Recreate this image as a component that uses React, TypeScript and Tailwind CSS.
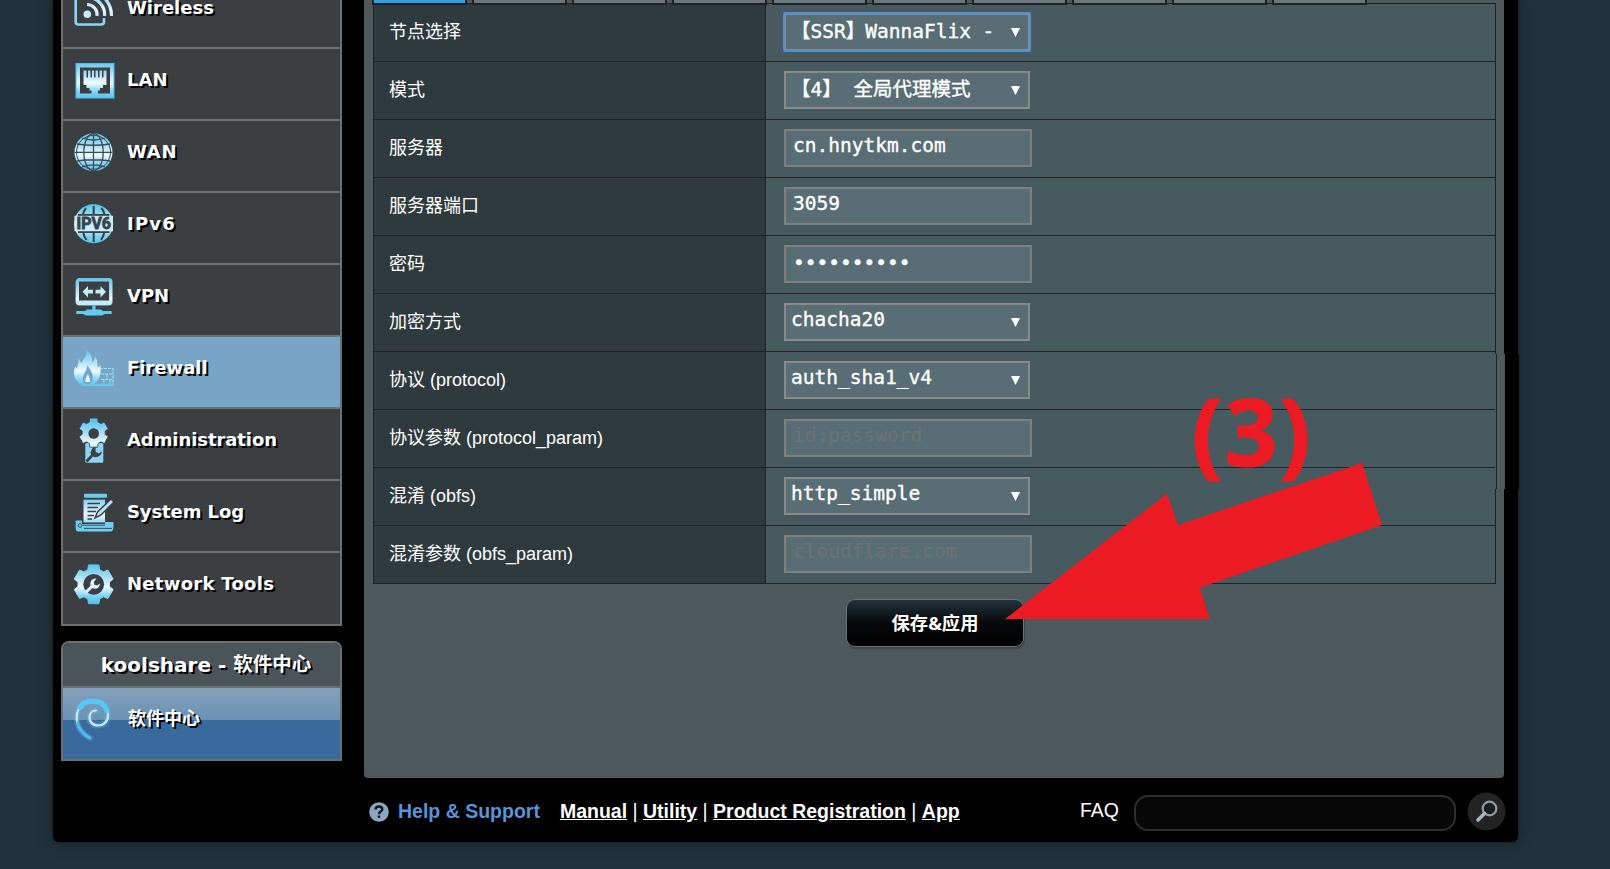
import React from "react";

const DARK = "#3b3f41";

function IconFrame({ children }: { children: React.ReactNode }) {
  return (
    <svg width="42" height="48" viewBox="0 0 42 48" className="block shrink-0 overflow-visible">
      <defs>
        <linearGradient id="ice" gradientUnits="userSpaceOnUse" x1="0" y1="2" x2="0" y2="40">
          <stop offset="0" stopColor="#58c4ee" />
          <stop offset="0.3" stopColor="#a5dcf6" />
          <stop offset="0.58" stopColor="#eefbff" />
          <stop offset="0.8" stopColor="#84d4f5" />
          <stop offset="1" stopColor="#52c2ee" />
        </linearGradient>
      </defs>
      {children}
    </svg>
  );
}

function gearPath(cx: number, cy: number, outer: number, inner: number) {
  const pts: string[] = [];
  for (let i = 0; i < 6; i++) {
    const mid = -90 + i * 60;
    const spots: [number, number][] = [
      [mid - 22, inner],
      [mid - 15, outer - 0.5],
      [mid + 15, outer - 0.5],
      [mid + 22, inner],
    ];
    for (const [deg, r] of spots) {
      const a = (deg * Math.PI) / 180;
      pts.push(`${(cx + r * Math.cos(a)).toFixed(2)} ${(cy + r * Math.sin(a)).toFixed(2)}`);
    }
  }
  return `M${pts.join("L")}Z`;
}

const WirelessIcon = () => (
  <IconFrame>
    <g fill="none" stroke="url(#ice)" strokeWidth="3.2">
      <path d="M1.7 3V35Q1.7 37.5 4.2 37.5H27Q30 37.5 30 35V31" strokeWidth="2.6" stroke="#8fd6f6" />
      <path d="M13 17.5A10 10 0 0 1 23 29" />
      <path d="M13 10.5A17 17 0 0 1 30.500 29" />
      <path d="M14 3.5A25 25 0 0 1 37.500 29" />
    </g>
    <circle cx="13.3" cy="27.3" r="3.8" fill="#c8ecfb" />
  </IconFrame>
);

const LanIcon = () => (
  <IconFrame>
    <rect x="2" y="4.5" width="38" height="34.5" fill="url(#ice)" />
    <rect x="2" y="4.5" width="38" height="34.5" fill="none" stroke="#52bdea" strokeWidth="1" />
    <rect x="6" y="8.5" width="30" height="26" fill={DARK} />
    <path
      d="M9.5 11.5H12.5V18.5H14V11.5H16.5V18.5H18V11.5H20V18.5H21.5V11.5H24V18.5H25.5V11.5H28V18.5H29.5V11.5H32.5V26H29V29H26V31.5H24V36H17.5V31.5H15.5V29H12.5V26H9.5Z"
      fill="url(#ice)"
    />
  </IconFrame>
);

const WanIcon = () => (
  <IconFrame>
    <circle cx="19.5" cy="21.3" r="19" fill="url(#ice)" />
    <g fill="none" stroke="#3b4a55" strokeWidth="1.3">
      <path d="M19.5 2.3V40.3M.5 21.3H38.5M3 13Q19.5 15.500 36 13M3 30Q19.500 27.500 36 30M8 7Q19.500 11 31 7M8 35.800Q19.500 32 31 35.800" />
      <ellipse cx="19.5" cy="21.3" rx="9.7" ry="18.6" />
      <circle cx="19.5" cy="21.3" r="17" strokeWidth="1" />
    </g>
  </IconFrame>
);

const Ipv6Icon = () => (
  <IconFrame>
    <circle cx="19.7" cy="20.7" r="19.5" fill="url(#ice)" />
    <g fill="none" stroke={DARK} strokeWidth="2">
      <path d="M19.7 3V12M12 5Q9.500 8 8.700 12.500M27.400 5Q30 8 30.700 12.500M19.700 29V39M9 29Q10 33.500 12.500 37M30.400 29Q29.400 33.500 27 37M4 12H35.500M4 29H35.500" />
    </g>
    <rect x="0.5" y="12.8" width="38.5" height="15.4" fill="#c9edfb" />
    <text
      x="2.5"
      y="26.2"
      textLength="34.5"
      lengthAdjust="spacingAndGlyphs"
      fill="#38444b"
      stroke="#38444b"
      strokeWidth="0.8"
      className="text-[16px] font-bold [font-family:Roboto,'Liberation_Sans',sans-serif]"
    >
      IPV6
    </text>
  </IconFrame>
);

const VpnIcon = () => (
  <IconFrame>
    <rect x="3.3" y="4.8" width="33.5" height="24" rx="2" fill="none" stroke="url(#ice)" strokeWidth="3.4" />
    <rect x="3" y="25.5" width="34" height="4.6" rx="1" fill="#c2ebfb" />
    <path d="M18.3 30.5H21.5V34.5H27L29 36H37.7V39H31L28 40.5H12L9 39H2.3V36H11L13 34.5H18.3Z" fill="#62c9f0" />
    <path d="M8.5 16.7L14 11V14.8H19V18.6H14V22.4ZM32 16.7L26.5 11V14.8H21.5V18.6H26.5V22.4Z" fill="#c4ebfb" />
  </IconFrame>
);

const FirewallIcon = () => (
  <IconFrame>
    <g fill="none" stroke="#9be0fa" strokeWidth="1.2">
      <path d="M26 21.5H39V38H8M27 27H39M27 32.500H39M33 27V32.500M36 32.500V38M30 32.500V38" strokeDasharray="3 1" />
      <path d="M8 37.700H39.500" stroke="#5ecbf4" strokeWidth="1.600" />
    </g>
    <path
      d="M12 3C16.500 5 18 10 18.500 15.500C20 14 20.500 12 21 9.500C24 13 23 17 24 20C25 20 25.500 19.500 26.300 18C28 27 25 35 18.500 38H9C3 36 0 31 0 26C0 23.500 .600 22 1.200 19.500L3 21.500C3.500 19 4.500 16 4.800 12L7.500 16C9 12 14 8 12 3Z"
      fill="url(#ice)"
    />
    <path d="M13.500 18C15 22 20 26 18.500 32C18 35.500 16 37 13.500 37C10.500 37 9 35 9 32C9 26 13 24 13.500 18Z" fill="#6fa6cd" />
    <path d="M13.800 27Q17 33 15.500 35H11.500Q11 32 13.800 27Z" fill="#ecfbff" />
  </IconFrame>
);

const AdminIcon = () => (
  <IconFrame>
    <rect x="11.3" y="24" width="18" height="19.7" rx="1.5" fill="#8ad4f4" />
    <path d="M12.5 42.5L19 35.5" stroke={DARK} strokeWidth="2.6" />
    <path d="M23.5 27.500A6.500 6.500 0 0 0 16.500 34Q19 39.500 24 37.800Q27.500 36 28 32.500L24.500 34.500L21.500 32.500V29.500Z" fill={DARK} />
    <path d={gearPath(19.7, 13.7, 15.6, 11.6)} fill="url(#ice)" stroke={DARK} strokeWidth="0.8" />
    <circle cx="19.7" cy="14.5" r="5.3" fill={DARK} />
  </IconFrame>
);

const LogIcon = () => (
  <IconFrame>
    <rect x="10" y="2.7" width="23" height="4" rx="1" fill="#6ecaf1" />
    <path d="M9.5 8.7H31V31.5H9.5Z" fill="url(#ice)" />
    <path d="M13.5 12.5H26M13.5 16.5H24M13.5 20.5H22M13.5 24.5H20M13.5 28H18" stroke={DARK} strokeWidth="1.5" />
    <path d="M21 27L23.5 21L37 8L40 11L27 24Z" fill="#b9e6fa" stroke={DARK} strokeWidth="1.5" />
    <path d="M1.7 29.5H8V33H31V31H39.500V35Q39.500 40.500 36.500 40.500H4.500Q1.700 40.500 1.700 37Z" fill="#70cdf2" />
    <path d="M8.5 34.2H31M10 37.4H38" stroke="#31546a" strokeWidth="1" />
    <circle cx="6" cy="34.5" r="1.8" fill="none" stroke="#31546a" strokeWidth="1" />
  </IconFrame>
);

const ToolsIcon = () => (
  <IconFrame>
    <path d={gearPath(19.7, 21.3, 20.6, 15.8)} fill="url(#ice)" stroke="url(#ice)" strokeWidth="1" strokeLinejoin="round" />
    <circle cx="19.7" cy="21.3" r="10.4" fill={DARK} />
    <path d="M12.8 28.3L18.500 22.800" stroke="#d5f1fc" strokeWidth="3" strokeLinecap="round" />
    <path d="M22.500 15.200Q17 15.500 16.300 20Q16 25.500 21 25.800Q25.600 25.500 26 20.200L23.200 22.600L20.300 21.800L19.900 18.900Z" fill="#e4f7fe" />
  </IconFrame>
);

const SwirlIcon = () => (
  <IconFrame>
    <g fill="none" strokeLinecap="round">
      <path
        d="M16 40C7 35 2.500 28 2.700 19C3 10 9 3 18 3C28 2.500 34 9 34 17C34 24 29 27.500 24.500 27.500C18.500 27.500 15.300 24 15.500 19C15.700 15 18.500 12.500 22 12.500"
        stroke="#5cc3f2"
        strokeOpacity="0.3"
        strokeWidth="6"
      />
      <path
        d="M16 40C7 35 2.500 28 2.700 19C3 10 9 3 18 3C28 2.500 34 9 34 17C34 24 29 27.500 24.500 27.500C18.500 27.500 15.300 24 15.500 19C15.700 15 18.500 12.500 22 12.500"
        stroke="#cdeafa"
        strokeWidth="2.200"
      />
      <path d="M6 9.500C9 4.500 13 3.200 18 3.500C27 3 31.500 7 32.800 13" stroke="#55c8f6" strokeWidth="5" />
      <path d="M3.500 25C5 31 9 36 15.500 39.800" stroke="#4db9f0" strokeWidth="3" />
    </g>
  </IconFrame>
);

type MenuEntry = { label: string; icon: React.FC; active?: boolean; track?: string };

const menu: MenuEntry[] = [
  { label: "Wireless", icon: WirelessIcon },
  { label: "LAN", icon: LanIcon },
  { label: "WAN", icon: WanIcon, track: "tracking-[0.7px]" },
  { label: "IPv6", icon: Ipv6Icon, track: "tracking-[1.2px]" },
  { label: "VPN", icon: VpnIcon },
  { label: "Firewall", icon: FirewallIcon, active: true },
  { label: "Administration", icon: AdminIcon, track: "tracking-[-0.08px]" },
  { label: "System Log", icon: LogIcon, track: "tracking-[-0.1px]" },
  { label: "Network Tools", icon: ToolsIcon, track: "tracking-[0.28px]" },
];

function Sidebar() {
  return (
    <nav className="w-[281px] shrink-0 text-white [font-family:'DejaVu_Sans','Noto_Sans_CJK_SC',sans-serif]">
      <ul className="-mt-[25px] border-2 border-[#6b7071]">
        {menu.map(({ label, icon: Icon, active, track = "" }) => (
          <li
            key={label}
            className={`flex h-[72px] items-start border-b-2 border-[#6b7071] pl-[11px] pt-[10px] last:h-[71px] last:border-b-0 ${
              active ? "bg-[#78a5c6]" : "bg-[#3b3f41]"
            }`}
          >
            <Icon />
            <span
              className={`ml-[11px] mt-[9px] whitespace-nowrap text-[18px] font-bold leading-[24px] [text-shadow:2px_2px_0_#000] ${track}`}
            >
              {label}
            </span>
          </li>
        ))}
      </ul>
      <section className="mt-[15px] rounded-t-[8px] border-2 border-[#6b7071]">
        <h2 className="flex h-[45px] items-center justify-center whitespace-nowrap rounded-t-[6px] border-b-2 border-[#6b7071] bg-[#4b5459] text-[20px] font-bold [text-shadow:2px_2px_0_#000]">
          <span className="ml-[9px]">koolshare -&nbsp;</span>
          <span className="text-[19.5px]">软件中心</span>
        </h2>
        <div className="flex h-[71px] items-start bg-[linear-gradient(#859fbb_0px,#7d9bb8_10px,#6a92b3_32px,#3a6a9b_32px)] pl-[11px] pt-[10px]">
          <SwirlIcon />
          <span className="ml-[12px] mt-[9px] text-[18px] font-bold leading-[24px] [text-shadow:2px_2px_0_#000]">软件中心</span>
        </div>
      </section>
    </nav>
  );
}

type Field = {
  label: string;
  kind: "select" | "input" | "password";
  value: string;
  hint?: boolean;
  focus?: boolean;
  cjk?: boolean;
};

const fields: Field[] = [
  { label: "节点选择", kind: "select", value: "【SSR】WannaFlix -", focus: true, cjk: true },
  { label: "模式", kind: "select", value: "【4】 全局代理模式", cjk: true },
  { label: "服务器", kind: "input", value: "cn.hnytkm.com" },
  { label: "服务器端口", kind: "input", value: "3059" },
  { label: "密码", kind: "password", value: "••••••••••" },
  { label: "加密方式", kind: "select", value: "chacha20" },
  { label: "协议 (protocol)", kind: "select", value: "auth_sha1_v4" },
  { label: "协议参数 (protocol_param)", kind: "input", value: "id:password", hint: true },
  { label: "混淆 (obfs)", kind: "select", value: "http_simple" },
  { label: "混淆参数 (obfs_param)", kind: "input", value: "cloudflare.com", hint: true },
];

function Control({ field }: { field: Field }) {
  const mono =
    "[font-family:'DejaVu_Sans_Mono','Noto_Sans_CJK_SC',monospace] text-[19.5px] leading-[30px] whitespace-pre";
  if (field.kind === "select") {
    return (
      <div
        className={`flex h-[38px] w-[246px] items-start justify-between border-2 border-[#8a8a8a] bg-[#596e74] pl-[5px] pr-[8px] text-white ${mono} ${
          field.focus ? "rounded-[1px] outline-2 -outline-offset-1 outline-[#4f8fdb]" : ""
        }`}
      >
        <span className={`[-webkit-text-stroke:0.35px_#fff] ${field.cjk ? "mt-[2px]" : ""}`}>{field.value}</span>
        <svg width="9" height="9" viewBox="0 0 9 9" className="mt-[13px]">
          <path d="M0 0H9L4.5 9Z" fill="#fff" />
        </svg>
      </div>
    );
  }
  return (
    <div
      className={`h-[38px] w-[248px] border-2 border-[#808080] bg-[#596e74] pl-[7px] ${mono} ${
        field.hint ? "text-[#6c7375]" : "text-white [-webkit-text-stroke:0.35px_#fff]"
      } ${field.kind === "password" ? "pt-[1px]" : ""}`}
    >
      {field.value}
    </div>
  );
}

function SettingsTable() {
  return (
    <div className="w-[1123px] border border-[#222]">
      {fields.map((f) => (
        <div key={f.label} className="flex h-[58px] border-b border-[#222] last:h-[57px] last:border-b-0">
          <div className="flex w-[392px] items-center border-r border-[#222] bg-[#2f3a3e] pl-[15px] text-[18px] text-white [font-family:'Liberation_Sans','Noto_Sans_CJK_SC',sans-serif]">
            {f.label}
          </div>
          <div className="flex flex-1 items-start bg-[#475a5f] pl-[18px] pt-[9px]">
            <Control field={f} />
          </div>
        </div>
      ))}
    </div>
  );
}

function Footer() {
  return (
    <footer className="flex h-[64px] items-center text-[19.5px] text-white [font-family:'Liberation_Sans',sans-serif]">
      <svg width="20" height="20" viewBox="0 0 20 20" className="ml-[5px] mt-[4px]">
        <circle cx="10" cy="10" r="9.8" fill="#8aa6c0" />
        <path
          d="M6.500 7.500Q6.700 4.500 10 4.500Q13.300 4.600 13.300 7.300Q13.200 9 11.300 9.900Q10 10.600 10 12.300"
          fill="none"
          stroke="#15191d"
          strokeWidth="2.4"
        />
        <rect x="8.8" y="13.6" width="2.4" height="2.3" fill="#15191d" />
      </svg>
      <span className="ml-[9px] mt-[4px] font-bold text-[#5a93d8]">Help &amp; Support</span>
      <span className="ml-[20px] mt-[4px] whitespace-nowrap">
        <b className="underline">Manual</b> | <b className="underline">Utility</b> |{" "}
        <b className="underline">Product Registration</b> | <b className="underline">App</b>
      </span>
      <span className="ml-auto mr-[15px] mt-[2px]">FAQ</span>
      <div className="mt-[5px] h-[36px] w-[322px] rounded-[14px] border-2 border-[#2b2f31] bg-[#080808]" />
      <svg width="39" height="39" viewBox="0 0 39 39" className="-mr-[2px] ml-[11px] mt-[3px]">
        <circle cx="19.5" cy="19.5" r="19" fill="#232323" />
        <circle cx="22.5" cy="16.5" r="6.8" fill="#1b1e20" stroke="#8f9ba3" strokeWidth="2.2" />
        <path d="M17.5 21.5L11 28" stroke="#a9b4bb" strokeWidth="3.6" strokeLinecap="round" />
      </svg>
    </footer>
  );
}

export default function App() {
  return (
    <div className="relative h-[869px] w-[1610px] overflow-hidden bg-[#21323e] pl-[53px]">
      <div className="flex h-[842px] w-[1465px] rounded-b-[6px] bg-black pl-[8px] shadow-[0_0_0_1px_#222222,0_0_12px_3px_#1b252c]">
        <Sidebar />
        <div className="ml-[22px] w-[1140px]">
          <main className="h-[778px] rounded-b-[4px] bg-[#4d595d]">
            <div className="relative z-10 -mb-[2px] ml-[8px] flex h-[5px] gap-[5px]">
              {Array.from({ length: 10 }, (_, i) => (
                <div
                  key={i}
                  className={`w-[95px] border-2 border-t-0 border-[#222] ${i === 0 ? "bg-[#2ea2dc]" : "bg-[#69787d]"}`}
                />
              ))}
            </div>
            <div className="ml-[9px]">
              <SettingsTable />
            </div>
            <button className="ml-[483px] mt-[16px] block h-[46px] w-[176px] rounded-[8px] bg-[linear-gradient(#22343e,#060809_50%,#000)] text-[18.3px] font-bold text-white shadow-[0_0_0_1px_#66757a,1px_2px_1px_1px_#3a454b] [font-family:'DejaVu_Sans','Noto_Sans_CJK_SC',sans-serif]">
              <span className="[font-family:'Noto_Sans_CJK_SC',sans-serif]">保存</span>
              <span className="[font-family:'Open_Sans',sans-serif]">&amp;</span>
              <span className="[font-family:'Noto_Sans_CJK_SC',sans-serif]">应用</span>
            </button>
          </main>
          <Footer />
        </div>
      </div>
      <svg width="1610" height="869" viewBox="0 0 1610 869" className="pointer-events-none absolute left-0 top-0 z-20">
        <path d="M1495.5 354V489" stroke="#475a5f" />
        <path d="M1496.5 354V489M1519.5 354V489" stroke="#222" />
        <path d="M1504.5 354V489" stroke="#4d595d" />
        <path d="M1518.5 354V489" stroke="#000" />
        <path d="M1362 463L1382 525L1199.7 587.7L1210 619H1005L1167 493.7L1178 525Z" fill="#ed1c24" />
        <text
          x="1191.5"
          y="465.5"
          fill="#ed1c24"
          stroke="#ed1c24"
          strokeWidth="1.2"
          className="text-[93px] font-bold tracking-[1.4px] [font-family:'Open_Sans',sans-serif]"
        >
          (3)
        </text>
      </svg>
    </div>
  );
}
